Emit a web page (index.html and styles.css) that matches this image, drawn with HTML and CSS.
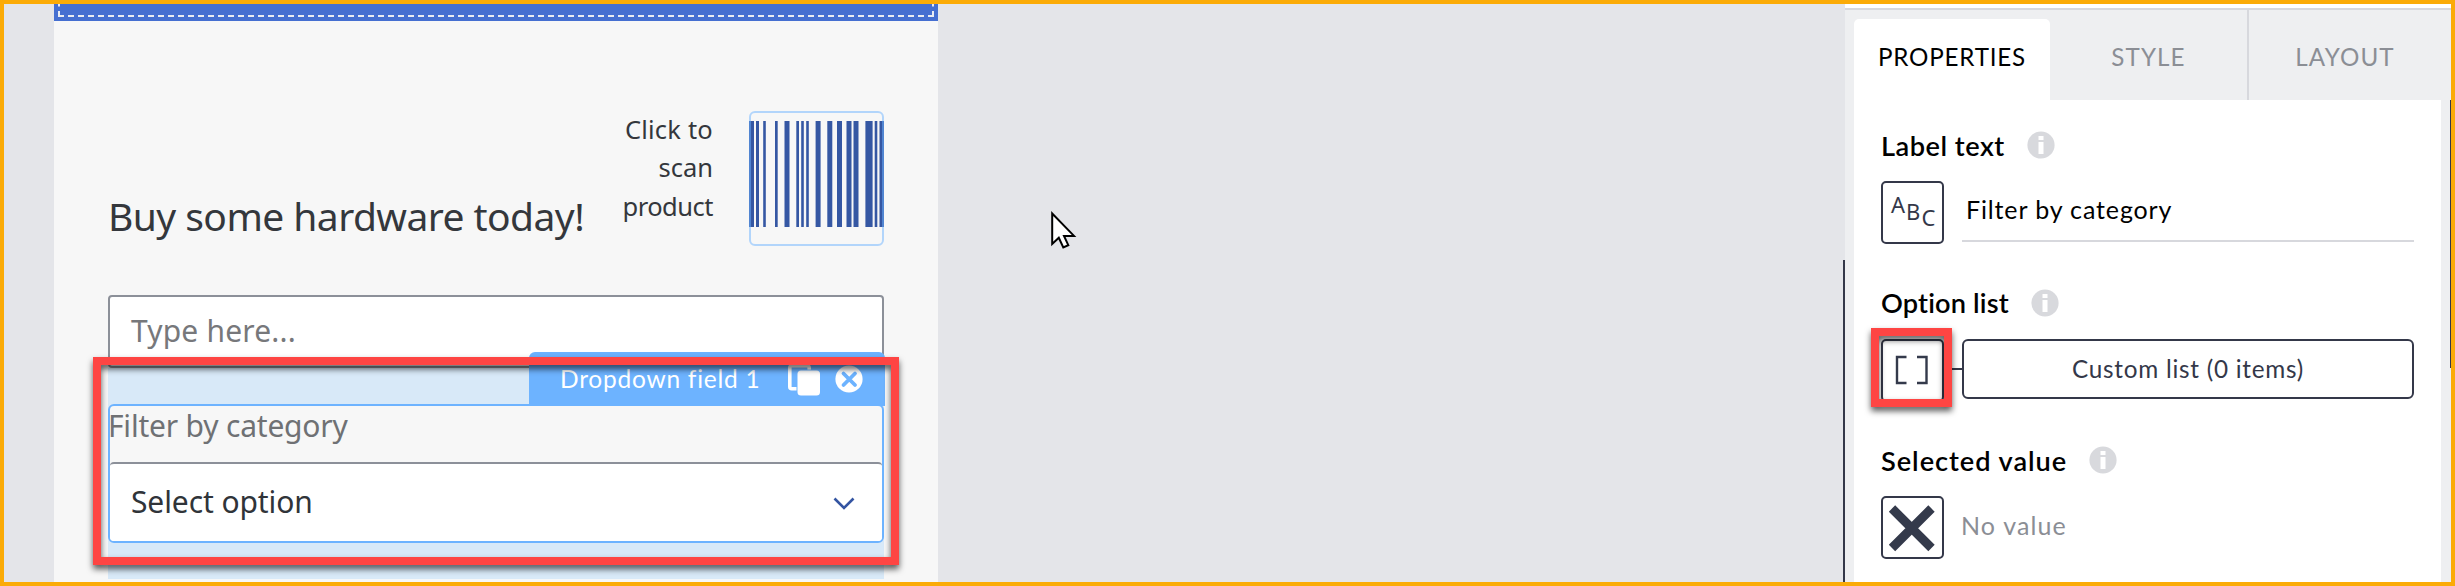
FILE: index.html
```html
<!DOCTYPE html>
<html lang="en">
<head>
<meta charset="utf-8">
<title>App builder</title>
<link rel="stylesheet" href="styles.css">
</head>
<body>
<div class="frame">
  <main class="canvas">
    <div class="page">
      <div class="page-bar"><div class="page-bar-outline"></div></div>
      <div class="hero">
        <h1 class="hero-title"><span class="t t-title">Buy some hardware today!</span></h1>
        <p class="hero-scan"><span class="t t-click">Click to</span><br><span class="t t-scan">scan</span><br><span class="t t-product">product</span></p>
        <div class="barcode">
          <svg width="135" height="135" viewBox="0 0 135 135" fill="#3557a3">
            <path d="M0 10h5v106H0zM7 10h3v106H7zM14.2 10h2.6v106h-2.6zM26 10h2.7v106H26zM35.5 10h5v106h-5zM47.3 10h2.7v106h-2.7zM52.2 10h2.6v106h-2.6zM57.2 10h2.6v106h-2.6zM66.6 10h5v106h-5zM78.3 10h5v106h-5zM88 10h5v106h-5zM97.5 10h5v106h-5zM104.5 10h5v106h-5zM116.4 10h7.2v106h-7.2zM125.7 10h2.6v106h-2.6zM130.5 10h4.5v106h-4.5z"/>
            <rect x="1" y="1" width="133" height="133" rx="5" fill="none" stroke="#6db3ff" stroke-opacity=".5" stroke-width="2"/>
          </svg>
        </div>
      </div>
      <div class="input"><span class="t t-type">Type here...</span></div>
      <section class="dropdown">
        <div class="dropdown-box">
          <label class="dropdown-label"><span class="t t-filter">Filter by category</span></label>
          <div class="dropdown-select">
            <span class="t t-select">Select option</span>
            <svg class="chevron" width="22" height="14" viewBox="0 0 22 14"><path d="M1.5 1.5 11 11l9.500-9.500" fill="none" stroke="#3455a2" stroke-width="2.6"/></svg>
          </div>
        </div>
        <div class="tag">
          <span class="t t-tag">Dropdown field 1</span>
          <svg class="tag-copy" width="32" height="32" viewBox="0 0 32 32"><rect x="1.800" y="1.800" width="19.400" height="23" rx="2" fill="none" stroke="#fff" stroke-width="3.600"/><rect x="8.500" y="5.500" width="25" height="26" rx="4" fill="#6db3ff"/><rect x="9.500" y="6.500" width="22.500" height="25" rx="3.500" fill="#fff"/></svg>
          <svg class="tag-close" width="28" height="28" viewBox="0 0 28 28"><circle cx="14" cy="14" r="13.600" fill="#fff"/><path d="M8.500 8.500l11.500 11.500M20 8.500 8.500 20" stroke="#6db3ff" stroke-width="3.800" stroke-linecap="round"/></svg>
        </div>
      </section>
      <div class="mark mark-field"></div>
    </div>
    <svg class="cursor" width="26" height="38" viewBox="0 0 26 38"><path d="M1.200 2.500v30.500l6.600-6.200 4.500 9.700 5-2.300-4.300-9.300h10z" fill="#fff" stroke="#000" stroke-width="2"/></svg>
  </main>
  <aside class="panel">
    <nav class="tabs">
      <div class="tab tab-active"><span class="t t-props">PROPERTIES</span></div>
      <div class="tab"><span class="t t-style">STYLE</span></div>
      <div class="tab tab-last"><span class="t t-layout">LAYOUT</span></div>
    </nav>
    <div class="props">
      <h2 class="prop-title"><span class="t t-p1">Label text</span><svg class="info" width="28" height="28" viewBox="0 0 28 28"><circle cx="14" cy="14" r="13.600" fill="#d8d9dd"/><path d="M11.500 5h5v4h-5zM11.500 11h5v12h-5z" fill="#fff"/></svg></h2>
      <div class="prop-row">
        <div class="icon-box abc"><span class="abc-a">A</span><span class="abc-b">B</span><span class="abc-c">C</span></div>
        <div class="text-value"><span class="t t-v1">Filter by category</span></div>
      </div>
      <h2 class="prop-title"><span class="t t-p2">Option list</span><svg class="info" width="28" height="28" viewBox="0 0 28 28"><circle cx="14" cy="14" r="13.600" fill="#d8d9dd"/><path d="M11.500 5h5v4h-5zM11.500 11h5v12h-5z" fill="#fff"/></svg></h2>
      <div class="prop-row">
        <div class="icon-box"><svg width="59" height="59" viewBox="0 0 59 59"><path d="M23.500 16H14v26h9.500M34 16h9.500v26H34" fill="none" stroke="#343a4b" stroke-width="2.400"/></svg><div class="mark mark-icon"></div></div>
        <div class="link"></div>
        <div class="list-button"><span class="t t-v2">Custom list (0 items)</span></div>
      </div>
      <h2 class="prop-title"><span class="t t-p3">Selected value</span><svg class="info" width="28" height="28" viewBox="0 0 28 28"><circle cx="14" cy="14" r="13.600" fill="#d8d9dd"/><path d="M11.500 5h5v4h-5zM11.500 11h5v12h-5z" fill="#fff"/></svg></h2>
      <div class="prop-row">
        <div class="icon-box"><svg width="59" height="59" viewBox="0 0 59 59"><path d="M9 10.500 48.500 50M48.500 10.500 9 50" stroke="#343a4b" stroke-width="9"/></svg></div>
        <div class="empty-value"><span class="t t-v3">No value</span></div>
      </div>
    </div>
  </aside>
</div>
</body>
</html>
```
FILE: styles.css
```css
* { box-sizing: border-box; margin: 0; padding: 0; font-weight: 400; }
body { font-family: "Noto Sans", sans-serif; }
svg { display: block; flex: none; }
.t { white-space: nowrap; }
.t-title { letter-spacing: -.56px; }
.t-click { letter-spacing: .2px; }
.t-product { letter-spacing: -.5px; }
.t-type { letter-spacing: .18px; }
.t-filter { letter-spacing: -.2px; }
.t-select { letter-spacing: -.1px; }
.t-tag { letter-spacing: .76px; }
.t-props { letter-spacing: .8px; }
.t-style, .t-layout { letter-spacing: 1.100px; }
.t-p1 { letter-spacing: .5px; }
.t-p2 { letter-spacing: .15px; }
.t-p3 { letter-spacing: .95px; }
.t-v1 { letter-spacing: .87px; }
.t-v2 { letter-spacing: .75px; }
.t-v3 { letter-spacing: 1.150px; }
.frame { width: 2455px; height: 586px; border: 4px solid #fbab07; display: flex; overflow: hidden; background: #e4e5e9; }

.canvas { position: relative; width: 1841px; padding-left: 50px; flex: none; }
.page { position: relative; width: 884px; height: 578px; background: #f7f7f7; color: #34373c; }
.page-bar { height: 17px; background: #456fd1; padding: 0 4px; overflow: hidden; display: flex; align-items: flex-end; }
.page-bar-outline { flex: none; width: 876px; height: 100px; margin-bottom: 4px; border: 2px dashed #e8ebf2; }

.hero { display: flex; height: 274px; padding: 90px 54px 0; }
.hero-title { width: 480px; font-size: 39px; line-height: 50px; padding-top: 80px; }
.hero-scan { width: 125px; margin-top: -1px; text-align: right; font-size: 25.500px; line-height: 38.300px; }
.barcode { margin-left: auto; width: 135px; height: 135px; }

.input { margin: 0 54px; height: 73px; border: 2px solid #8c9099; border-radius: 4px; background: #fff; padding-left: 21px; font-size: 30px; line-height: 68px; color: #77787b; }
.dropdown { position: relative; margin: 0 54px; height: 211px; padding: 36px 0; background: linear-gradient(#d8e9f8, #d8e9f8); }
.dropdown-box { height: 139px; border: 2px solid #6db3ff; border-radius: 6px; background: #f7f7f7; overflow: hidden; }
.dropdown-label { display: block; height: 56px; margin-left: -2px; font-size: 30px; line-height: 39px; color: #6f7174; }
.dropdown-select { height: 79px; border-top: 2px solid #8c9099; border-radius: 4px 4px 0 0; background: #fff; display: flex; justify-content: space-between; padding: 0 27px 0 21px; font-size: 30px; line-height: 76px; color: #303439; }
.chevron { margin-top: 33px; }
.tag { position: absolute; left: 421px; top: -16px; width: 356px; height: 54px; background: #6db3ff; border-radius: 6px 6px 0 0; color: #fff; font-family: Lato, sans-serif; font-size: 24.500px; line-height: 54px; display: flex; padding-left: 31px; }
.tag-copy { position: absolute; left: 259px; top: 12px; }
.tag-close { position: absolute; left: 306px; top: 13px; }

.mark { position: absolute; border: 8px solid #fe4543; filter: drop-shadow(0 4px 3px rgba(0, 0, 0, .65)); }
.mark-field { left: 39px; top: 353px; width: 806px; height: 208px; }
.mark-icon { left: -12px; top: -13px; width: 81px; height: 79px; }
.cursor { position: absolute; left: 1047px; top: 207px; }

.panel { position: relative; width: 606px; background: #eeeff1; font-family: Lato, sans-serif; display: flex; flex-direction: column; flex: none; }
.panel::before { content: ""; position: absolute; left: -2px; top: 256px; width: 2px; bottom: 0; background: #343849; }
.panel::after { content: ""; position: absolute; right: 0; top: 96px; width: 1px; height: 268px; background: #343849; }
.tabs { height: 96px; flex: none; display: flex; padding-left: 9px; border-top: 4px solid #fff; box-shadow: inset 0 2px #d7d8dd; font-size: 24.200px; color: #8b8e95; }
.tab { width: 199px; margin-top: 2px; padding-top: 9px; line-height: 75px; text-align: center; border-right: 2px solid #d7d8dd; }
.tab-active { width: 196px; margin-top: 11px; padding: 0; background: #fff; border: 0; border-radius: 5px 5px 0 0; color: #000; }
.tab-last { width: 202px; border: 0; padding-right: 10px; }
.props { width: 587px; margin-left: 9px; flex: 1; background: #fff; padding: 23px 27px 0; color: #000; }
.prop-title { display: flex; align-items: center; height: 44px; font-size: 27.200px; font-weight: 600; }
.prop-title .t { font-weight: 600; }
.info { margin-left: 22px; }
.prop-row { display: flex; height: 63px; margin: 14px 0 36.500px; }
.icon-box { position: relative; width: 63px; height: 63px; border: 2px solid #343849; border-radius: 5px; flex: none; color: #343849; }
.abc { display: flex; font-family: "Noto Sans", sans-serif; font-size: 22px; line-height: 22px; padding-left: 8px; }
.abc-a { padding-top: 10px; }
.abc-b { padding: 17px 1px 0; }
.abc-c { padding-top: 23px; }
.text-value { margin-left: 18px; flex: 1; height: 61px; border-bottom: 2px solid #d7d8dd; font-size: 25px; line-height: 56px; padding-left: 4px; }
.link { width: 18px; height: 2px; margin-top: 29px; background: #343849; }
.list-button { flex: 1; height: 60px; border: 2px solid #343849; border-radius: 6px; text-align: center; font-size: 24.300px; line-height: 56px; color: #343849; }
.empty-value { margin-left: 17px; font-size: 25px; line-height: 59px; color: #8b8e95; }
```
